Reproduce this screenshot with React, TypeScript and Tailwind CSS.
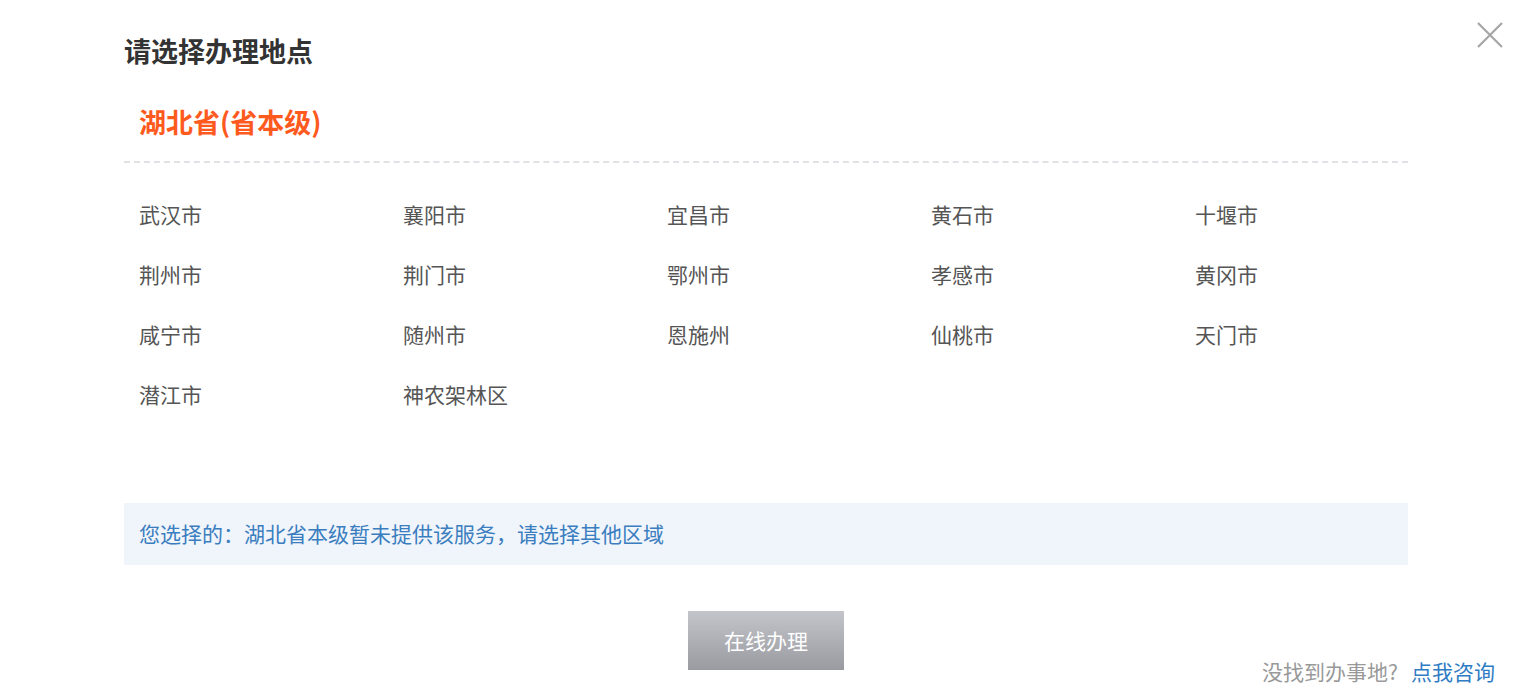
import React from "react";

const cities = [
  "武汉市", "襄阳市", "宜昌市", "黄石市", "十堰市",
  "荆州市", "荆门市", "鄂州市", "孝感市", "黄冈市",
  "咸宁市", "随州市", "恩施州", "仙桃市", "天门市",
  "潜江市", "神农架林区",
];

const App = () => {
  return (
    <div
      className="relative w-[1526px] h-[697px] bg-white pl-[124px] pr-[118px] overflow-hidden"
      style={{ fontFamily: '"Microsoft YaHei", "Noto Sans CJK SC", "Noto Sans", sans-serif' }}
    >
      <button className="absolute right-[22px] top-[21px] w-[28px] h-[28px] text-[#a6a6a6]">
        <svg viewBox="0 0 28 28" width="28" height="28" fill="none" stroke="currentColor" strokeWidth="2.2">
          <path d="M2 2 L26 26 M26 2 L2 26" />
        </svg>
      </button>

      <h2 className="pt-[37px] text-[27px] leading-[28px] font-bold text-[#333333]">请选择办理地点</h2>

      <div className="mt-[42px] pb-[24px] border-b-2 border-dashed border-[#e1e1e6]">
        <h3 className="pl-[15px] text-[27px] leading-[30px] font-bold text-[#fe5a1e]">湖北省(省本级)</h3>
      </div>

      <ul className="mt-[22px] grid grid-cols-[repeat(5,264px)]">
        {cities.map((c) => (
          <li key={c} className="h-[60px] flex items-center pl-[15px] text-[21px] text-[#555555] cursor-pointer">
            {c}
          </li>
        ))}
      </ul>

      <div className="mt-[78px] h-[62px] flex items-center px-[15px] bg-[#f0f4fb] text-[21px] text-[#3a7ec0]">
        您选择的：湖北省本级暂未提供该服务，请选择其他区域
      </div>

      <div className="mt-[46px] flex justify-center">
        <button className="w-[156px] h-[59px] bg-gradient-to-b from-[#c3c5cb] to-[#999ba1] text-white text-[21px]">
          在线办理
        </button>
      </div>

      <div className="absolute right-[31px] bottom-[14px] text-[21px] leading-[24px]">
        <span className="text-[#999999]">没找到办事地?</span>
        <a className="ml-[13px] text-[#2f7cc4] cursor-pointer">点我咨询</a>
      </div>
    </div>
  );
};

export default App;
